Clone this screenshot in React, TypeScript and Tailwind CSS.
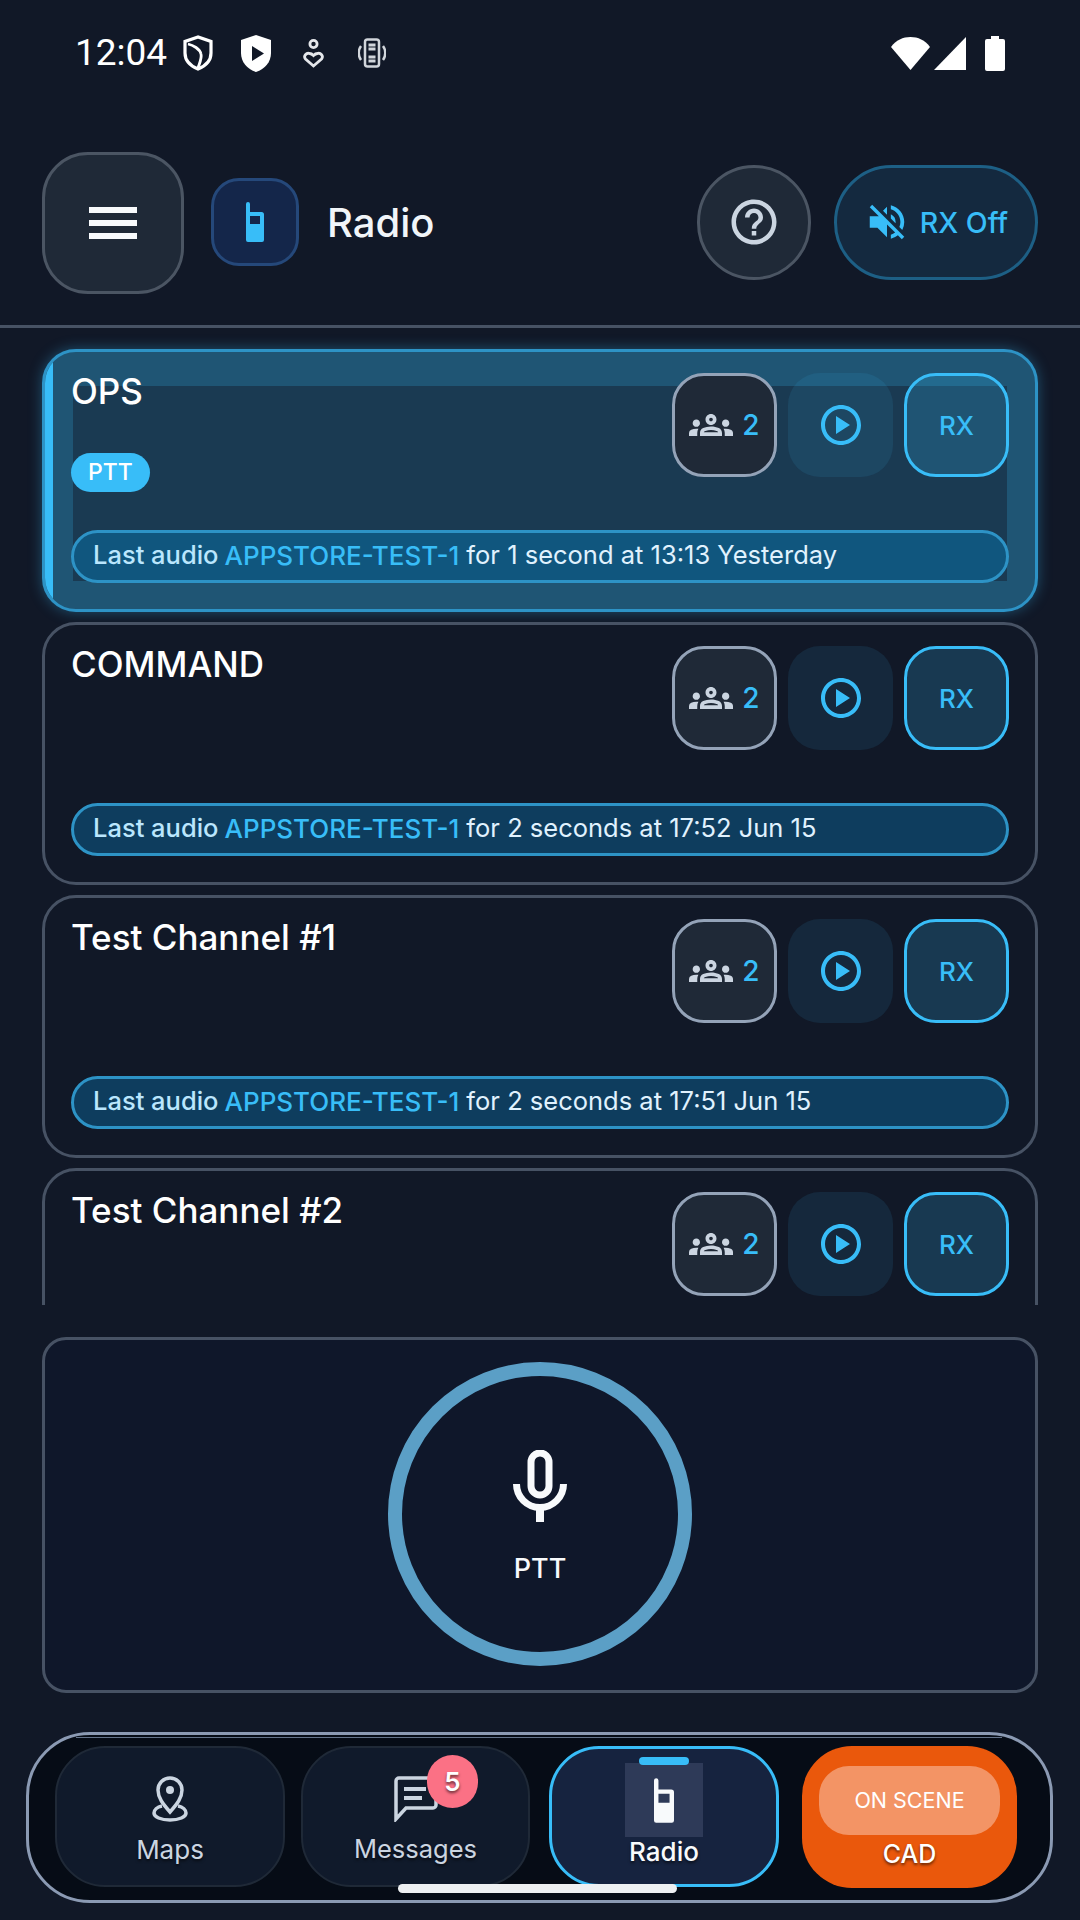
import { MdOutlineGroups, MdOutlineHelpOutline, MdOutlinePlayCircle, MdVolumeOff } from "react-icons/md";

interface ChannelProps {
  name: string;
  seconds?: string;
  when?: string;
  active?: boolean;
}

function RadioIcon({ className }: { className: string }) {
  return (
    <svg className={className} viewBox="0 0 18 40" fill="currentColor">
      <path
        fillRule="evenodd"
        d="M0 2a2 2 0 0 1 4 0v8h11.5a2.5 2.5 0 0 1 2.5 2.5V38a2 2 0 0 1-2 2H2a2 2 0 0 1-2-2Z M4 14v8h10v-8Z"
      />
    </svg>
  );
}

function StatusIcons() {
  return (
    <div className="flex items-center">
      <svg className="ml-[16px] w-[30px] h-[36px] text-white" viewBox="0 0 30 36" fill="none" stroke="currentColor" strokeWidth="3.2">
        <path d="M15 2 2 6.5V18c0 7.5 5.5 13 13 16 7.500-3 13-8.500 13-16V6.500Z" />
        <path d="M5 9c5 1 12 5 13 10 1 4-1 8-3 14" strokeWidth="2.8" />
      </svg>
      <svg className="ml-[28px] w-[30px] h-[37px] text-white" viewBox="0 0 30 37">
        <path fill="currentColor" d="M15 0 0 5v13c0 9 6 16 15 19 9-3 15-10 15-19V5Z" />
        <path fill="#111827" d="M11 11v15l12-7.500Z" />
      </svg>
      <svg className="ml-[32px] w-[21px] h-[29px] text-[#e5e7eb]" viewBox="0 0 21 29" fill="none" stroke="currentColor" strokeWidth="2.8">
        <circle cx="10.500" cy="5" r="3.600" />
        <path d="M10.500 27 2.500 20c-2.500-3 1-6.500 4-5.500 2 0 3 1 4 2 1-1 2-2 4-2 3-1 6.500 2.500 4 5.500Z" />
      </svg>
      <svg className="ml-[34px] w-[28px] h-[30px] text-[#d1d5db]" viewBox="0 0 28 30" fill="none" stroke="currentColor" strokeWidth="2.5">
        <rect x="7" y="1.500" width="14" height="27" rx="2.500" />
        <path d="M3 8C0 12 0 18 3 22M25 8c3 4 3 10 0 14" />
        <path d="M10.500 7h7M10.500 11h7M10.500 19h7M10.500 23h7" strokeWidth="3" />
      </svg>
    </div>
  );
}

function Channel({ name, seconds, when, active }: ChannelProps) {
  return (
    <div
      className={`relative shrink-0 h-[263px] rounded-[34px] border-[3px] overflow-hidden pt-[34px] px-[28px] ${
        active
          ? "border-[#2d93c6] bg-[#1f5574] shadow-[0_0_14px_rgba(56,189,248,0.35)]"
          : "border-[#475264] bg-[#111827]"
      }`}
    >
      {active && <div className="absolute left-0 top-0 bottom-0 w-[8px] bg-[#38bdf8]" />}
      <div className={`relative h-[195px] flex flex-col ${active ? "bg-[#1a3a52]" : ""}`}>
        <div className="-mt-[13px] h-[104px] flex items-start justify-between -mr-[2px] -ml-[2px] shrink-0">
          <div className="flex flex-col items-start">
            <div className="text-[35px] leading-[36px] font-medium text-white">{name}</div>
            {active && (
              <div className="mt-[44px] h-[39px] w-[79px] rounded-full bg-[#38bdf8] flex items-center justify-center text-[23px] font-medium text-white">
                PTT
              </div>
            )}
          </div>
          <div className="flex gap-[11px]">
            <div className="w-[105px] h-[104px] rounded-[32px] border-[3px] border-[#94a3b8] bg-[#1f2937] flex items-center justify-center gap-[9px]">
              <MdOutlineGroups className="w-[44px] h-[44px] text-[#cbd5e1]" />
              <span className="text-[28px] font-medium text-[#38bdf8]">2</span>
            </div>
            <div className="w-[105px] h-[104px] rounded-[32px] bg-[#38bdf8]/10 flex items-center justify-center">
              <MdOutlinePlayCircle className="w-[48px] h-[48px] text-[#38bdf8]" />
            </div>
            <div className="w-[105px] h-[104px] rounded-[32px] border-[3px] border-[#38bdf8] bg-[#38bdf8]/20 flex items-center justify-center text-[26px] font-medium text-[#38bdf8]">
              RX
            </div>
          </div>
        </div>
        {seconds && (
          <div
            className={`mt-auto -mb-[2px] -mx-[2px] h-[53px] rounded-full border-[3px] border-[#2d93c6] flex items-center pl-[19px] pb-[3px] text-[25.5px] whitespace-nowrap ${
              active ? "bg-[#10567e]" : "bg-[#0e3d5e]"
            }`}
          >
            <span className="font-medium text-[#bae6fd]">Last audio</span>
            <span className="ml-[6px] text-[26px] font-medium text-[#38bdf8]">APPSTORE-TEST-1</span>
            <span className="ml-[7px] text-[#e0f2fe]">
              for {seconds} at {when}
            </span>
          </div>
        )}
      </div>
    </div>
  );
}

export default function App() {
  return (
    <div className="relative w-[1080px] h-[1920px] bg-[#111827] flex flex-col overflow-hidden font-[Inter,sans-serif]">
      {/* status bar */}
      <div className="h-[106px] shrink-0 flex items-center justify-between pl-[75px] pr-[75px]">
        <div className="flex items-center">
          <span className="font-[Roboto,sans-serif] text-[37px] text-white">12:04</span>
          <StatusIcons />
        </div>
        <div className="flex items-center">
          <svg className="w-[39px] h-[33px] text-white" viewBox="0 0 39 33" fill="currentColor">
            <path d="M19.500 33 0 10C5 3 12 0 19.500 0S34 3 39 10Z" />
          </svg>
          <svg className="ml-[4px] w-[32px] h-[33px] text-white" viewBox="0 0 32 33" fill="currentColor">
            <path d="M32 0v33H0Z" />
          </svg>
          <svg className="ml-[19px] w-[20px] h-[35px] text-white" viewBox="0 0 20 35" fill="currentColor">
            <path d="M6 0h8v3h4a2 2 0 0 1 2 2v28a2 2 0 0 1-2 2H2a2 2 0 0 1-2-2V5a2 2 0 0 1 2-2h4Z" />
          </svg>
        </div>
      </div>

      {/* header */}
      <div className="h-[222px] shrink-0 border-b-[3px] border-[#475264] pt-[13px] pl-[42px] pr-[42px] flex items-center">
        <div className="shrink-0 mt-[2px] w-[142px] h-[142px] rounded-[46px] border-[3px] border-[#4b5563] bg-[#1f2937] flex flex-col items-center justify-center gap-[7px]">
          <div className="w-[48px] h-[6px] bg-[#f8fafc]" />
          <div className="w-[48px] h-[6px] bg-[#f8fafc]" />
          <div className="w-[48px] h-[6px] bg-[#f8fafc]" />
        </div>
        <div className="shrink-0 ml-[27px] w-[88px] h-[88px] rounded-[28px] border-[3px] border-[#25487a] bg-[#14264a] flex items-center justify-center text-[#38bdf8]">
          <RadioIcon className="w-[18px] h-[40px]" />
        </div>
        <div className="ml-[28px] mt-[2px] text-[40px] font-medium text-[#f1f5f9]">Radio</div>
        <div className="shrink-0 ml-auto w-[114px] h-[115px] rounded-full border-[3px] border-[#4b5563] bg-[#1f2937] flex items-center justify-center">
          <MdOutlineHelpOutline className="w-[54px] h-[54px] text-[#cbd5e1]" />
        </div>
        <div className="shrink-0 ml-[23px] w-[204px] h-[115px] rounded-full border-[3px] border-[#1d5f85] bg-[#14293f] flex items-center justify-center gap-[10px] text-[#38bdf8]">
          <MdVolumeOff className="w-[46px] h-[46px]" />
          <span className="mt-[2px] text-[28.5px] font-medium">RX Off</span>
        </div>
      </div>

      {/* channels */}
      <div className="h-[977px] shrink-0 overflow-hidden pt-[21px] px-[42px] flex flex-col gap-[10px]">
        <Channel active name="OPS" seconds="1 second" when="13:13 Yesterday" />
        <Channel name="COMMAND" seconds="2 seconds" when="17:52 Jun 15" />
        <Channel name="Test Channel #1" seconds="2 seconds" when="17:51 Jun 15" />
        <Channel name="Test Channel #2" />
      </div>

      {/* ptt panel */}
      <div className="mt-[32px] mx-[42px] h-[356px] shrink-0 rounded-[24px] border-[3px] border-[#475264] bg-[#0f172a] flex items-center justify-center pb-[2px]">
        <div className="w-[304px] h-[304px] rounded-full border-[14px] border-[#5b9fc6] flex flex-col items-center justify-center">
          <svg className="mt-[12px] w-[54px] h-[72px] text-[#f8fafc]" viewBox="0 0 54 72" fill="none" stroke="currentColor" strokeWidth="7">
            <rect x="18" y="3" width="18" height="42" rx="9" />
            <path d="M3.500 34a23.500 23.500 0 0 0 47 0" />
            <path d="M27 56v16" strokeWidth="8" />
          </svg>
          <div className="mt-[27px] text-[27px] font-medium text-[#f8fafc]">PTT</div>
        </div>
      </div>

      {/* bottom nav */}
      <div className="relative mt-[39px] ml-[26px] w-[1027px] h-[171px] shrink-0 rounded-[64px] border-[3px] border-[#8b9ab3] bg-[#060c16] pt-[11px] pl-[26px] flex items-start [text-shadow:0_2px_3px_rgba(0,0,0,0.6)]">
        <div className="absolute left-[47px] top-[2px] w-[926px] h-[1px] bg-[#64748b]" />
        <div className="shrink-0 w-[230px] h-[141px] rounded-[50px] border-[2px] border-[#1f2937] bg-[#101a2b] flex flex-col items-center pt-[28px]">
          <svg className="w-[36px] h-[46px] text-[#cbd5e1]" viewBox="0 0 36 46" fill="none" stroke="currentColor" strokeWidth="3.500">
            <path d="M18 36C11 28 6 22 6 14a12 12 0 0 1 24 0c0 8-5 14-12 22Z" />
            <circle cx="18" cy="14" r="4" fill="currentColor" stroke="none" />
            <path d="M10 30c-5 1-8 4-8 7 0 4 7 7 16 7s16-3 16-7c0-3-3-6-8-7" />
          </svg>
          <div className="mt-[8px] text-[26px] text-[#cbd5e1]">Maps</div>
        </div>
        <div className="relative shrink-0 ml-[16px] w-[229px] h-[141px] rounded-[50px] border-[2px] border-[#1f2937] bg-[#101a2b] flex flex-col items-center pt-[28px]">
          <svg className="w-[44px] h-[46px] text-[#cbd5e1]" viewBox="0 0 44 46" fill="none" stroke="currentColor" strokeWidth="3.500">
            <path d="M2 43V5a3 3 0 0 1 3-3h34a3 3 0 0 1 3 3v24a3 3 0 0 1-3 3H12Z" />
            <path d="M10 13h22M10 22h18" strokeWidth="4" />
          </svg>
          <div className="mt-[8px] text-[25.5px] text-[#cbd5e1]">Messages</div>
          <div className="absolute left-[124px] top-[7px] w-[51px] h-[53px] rounded-full bg-[#fb7185] flex items-center justify-center text-[26px] font-semibold text-white">
            5
          </div>
        </div>
        <div className="relative shrink-0 ml-[19px] w-[230px] h-[141px] rounded-[50px] border-[3px] border-[#38bdf8] bg-[#16233f] flex flex-col items-center pt-[14px]">
          <div className="absolute top-[8px] w-[50px] h-[8px] rounded-full bg-[#38bdf8]" />
          <div className="w-[78px] h-[74px] bg-[#2e3a58] flex items-center justify-center text-[#f8fafc]">
            <RadioIcon className="w-[20px] h-[45px]" />
          </div>
          <div className="-mt-[5px] text-[26px] font-medium text-[#f8fafc]">Radio</div>
        </div>
        <div className="shrink-0 ml-[23px] w-[215px] h-[142px] rounded-[50px] bg-[#ea580c] flex flex-col items-center pt-[20px]">
          <div className="w-[181px] h-[69px] rounded-[30px] bg-[#f39465] flex items-center justify-center text-[21.5px] text-white [text-shadow:none]">
            ON SCENE
          </div>
          <div className="mt-[1px] text-[25px] font-medium text-white">CAD</div>
        </div>
      </div>

      {/* home indicator */}
      <div className="absolute left-[398px] top-[1884px] w-[279px] h-[9px] rounded-full bg-[#eef0f2]" />
    </div>
  );
}
